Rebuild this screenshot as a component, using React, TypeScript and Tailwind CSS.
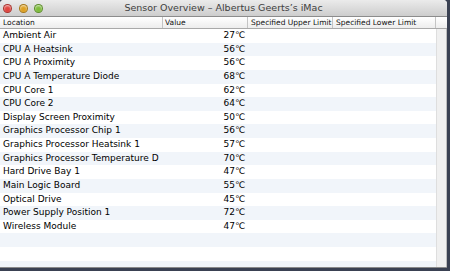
import React from 'react';

const sensors = [
  { name: 'Ambient Air', value: '27℃' },
  { name: 'CPU A Heatsink', value: '56℃' },
  { name: 'CPU A Proximity', value: '56℃' },
  { name: 'CPU A Temperature Diode', value: '68℃' },
  { name: 'CPU Core 1', value: '62℃' },
  { name: 'CPU Core 2', value: '64℃' },
  { name: 'Display Screen Proximity', value: '50℃' },
  { name: 'Graphics Processor Chip 1', value: '56℃' },
  { name: 'Graphics Processor Heatsink 1', value: '57℃' },
  { name: 'Graphics Processor Temperature D', value: '70℃' },
  { name: 'Hard Drive Bay 1', value: '47℃' },
  { name: 'Main Logic Board', value: '55℃' },
  { name: 'Optical Drive', value: '45℃' },
  { name: 'Power Supply Position 1', value: '72℃' },
  { name: 'Wireless Module', value: '47℃' },
];

const emptyRows = 3;

function Light({ color }: { color: string }) {
  return (
    <div
      className={`w-[9px] h-[9px] rounded-full border border-black/25 ${color}`}
      style={{ boxShadow: 'inset 0 1px 2px rgba(255,255,255,0.7)' }}
    />
  );
}

export default function App() {
  const rows = [...sensors, ...Array.from({ length: emptyRows }, () => null)];

  return (
    <div className="w-[450px] h-[271px] bg-[#3a4152] overflow-hidden" style={{ fontFamily: '"DejaVu Sans", sans-serif' }}>
      <div className="w-[447px] h-[268px] bg-white flex flex-col overflow-hidden rounded-t-[4px] border-b border-[#8a8a8a]">
        {/* title bar */}
        <div className="relative h-[17px] shrink-0 bg-gradient-to-b from-[#ebebeb] to-[#cdcdcd] border-b border-[#8c8c8c] flex items-center">
          <div className="flex items-center gap-[6.5px] pl-[3px]">
            <Light color="bg-[#e0443e]" />
            <Light color="bg-[#dea123]" />
            <Light color="bg-[#7ebc3b]" />
          </div>
          <div className="absolute inset-0 flex items-center justify-center text-[9.5px] text-[#404040]">
            Sensor Overview – Albertus Geerts’s iMac
          </div>
        </div>

        {/* header */}
        <div className="h-[12px] shrink-0 flex bg-gradient-to-b from-white to-[#ededed] border-b border-[#a9a9a9] text-[7.5px] text-[#111] leading-[11px]">
          <div className="w-[163px] pl-[3px] border-r border-[#c4c4c4] overflow-hidden whitespace-nowrap">Location</div>
          <div className="w-[85px] pl-[2px] border-r border-[#c4c4c4] overflow-hidden whitespace-nowrap">Value</div>
          <div className="w-[85px] pl-[3px] border-r border-[#c4c4c4] overflow-hidden whitespace-nowrap">Specified Upper Limit</div>
          <div className="w-[103px] pl-[3px] border-r border-[#c4c4c4] overflow-hidden whitespace-nowrap">Specified Lower Limit</div>
          <div className="flex-1" />
        </div>

        {/* body */}
        <div className="flex flex-1 min-h-0">
          <div className="w-[436px] flex flex-col text-[9px] text-black">
            {rows.map((row, i) => (
              <div
                key={i}
                className={`h-[13.64px] shrink-0 flex items-center ${i % 2 === 1 ? 'bg-[#f1f5fa]' : 'bg-white'}`}
              >
                {row && (
                  <>
                    <div className="w-[163px] pl-[3px] whitespace-nowrap">{row.name}</div>
                    <div className="w-[82px] text-right whitespace-nowrap">{row.value}</div>
                  </>
                )}
              </div>
            ))}
          </div>
          <div className="flex-1 bg-[#f0f0f0] border-l border-[#dedede] border-r border-r-[#bdbdbd]" />
        </div>
      </div>
    </div>
  );
}
